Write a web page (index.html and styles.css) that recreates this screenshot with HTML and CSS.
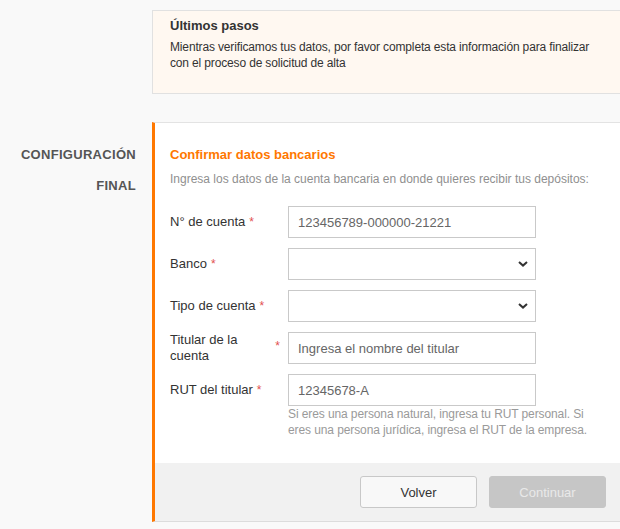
FILE: index.html
```html
<!DOCTYPE html>
<html lang="es">
<head>
<meta charset="utf-8">
<link rel="stylesheet" href="styles.css">
</head>
<body>
<div class="page">
  <section class="notice">
    <h2 class="notice-title">Últimos pasos</h2>
    <p class="notice-text">Mientras verificamos tus datos, por favor completa esta información para finalizar con el proceso de solicitud de alta</p>
  </section>

  <div class="step">
    <div class="step-name">CONFIGURACIÓN<br>FINAL</div>
    <section class="card">
      <div class="card-body">
        <h3 class="card-title">Confirmar datos bancarios</h3>
        <p class="card-sub">Ingresa los datos de la cuenta bancaria en donde quieres recibir tus depósitos:</p>

        <div class="row">
          <label class="label"><span>N° de cuenta</span><span class="req">*</span></label>
          <div class="field"><input class="input" type="text" value="123456789-000000-21221"></div>
        </div>
        <div class="row">
          <label class="label"><span>Banco</span><span class="req">*</span></label>
          <div class="field"><div class="select"><svg class="chev" viewBox="0 0 10 6" width="10" height="6"><path d="M1 1l4 3.6L9 1" fill="none" stroke="#333" stroke-width="2"/></svg></div></div>
        </div>
        <div class="row">
          <label class="label"><span>Tipo de cuenta</span><span class="req">*</span></label>
          <div class="field"><div class="select"><svg class="chev" viewBox="0 0 10 6" width="10" height="6"><path d="M1 1l4 3.6L9 1" fill="none" stroke="#333" stroke-width="2"/></svg></div></div>
        </div>
        <div class="row">
          <label class="label label-wrap"><span class="label-text">Titular de la cuenta</span><span class="req">*</span></label>
          <div class="field"><input class="input" type="text" placeholder="Ingresa el nombre del titular"></div>
        </div>
        <div class="row">
          <label class="label"><span>RUT del titular</span><span class="req">*</span></label>
          <div class="field">
            <input class="input" type="text" value="12345678-A">
            <p class="help">Si eres una persona natural, ingresa tu RUT personal. Si eres una persona jurídica, ingresa el RUT de la empresa.</p>
          </div>
        </div>
      </div>
      <div class="card-foot">
        <button class="btn btn-back" type="button">Volver</button>
        <button class="btn btn-next" type="button" disabled>Continuar</button>
      </div>
    </section>
  </div>
</div>
</body>
</html>
```

FILE: styles.css
```css
html, body {
  margin: 0;
  padding: 0;
}
body {
  background: #f9f9f9;
  font-family: "Liberation Sans", Arial, sans-serif;
  color: #333;
  overflow: hidden;
}
.page {
  width: 622px;
  padding-top: 10px;
}
.notice {
  margin-left: 152px;
  background: #fff8f1;
  border: 1px solid #e1e1e1;
  padding: 7px 0 22px 17px;
}
.notice-title {
  margin: 0;
  font-size: 13px;
  line-height: 16px;
  font-weight: bold;
  color: #333;
}
.notice-text {
  margin: 5px 0 0;
  max-width: 428px;
  font-size: 12px;
  line-height: 16px;
  color: #333;
  letter-spacing: -0.15px;
}
.step {
  display: flex;
  margin-top: 28px;
}
.step-name {
  width: 152px;
  box-sizing: border-box;
  padding: 17px 16px 0 0;
  text-align: right;
  font-size: 13px;
  line-height: 31px;
  font-weight: bold;
  color: #555;
  letter-spacing: 0.3px;
}
.card {
  flex: 1;
  background: #fff;
  border-top: 1px solid #e3e3e3;
  border-bottom: 1px solid #dcdcdc;
  border-right: 1px solid #e3e3e3;
  border-left: 3px solid #ff7800;
}
.card-body {
  padding: 24px 15px 25px 15px;
}
.card-title {
  margin: 0;
  font-size: 13px;
  line-height: 16px;
  font-weight: bold;
  color: #ff7800;
}
.card-sub {
  margin: 8px 0 19px;
  font-size: 12px;
  line-height: 16px;
  color: #8f8f8f;
}
.row {
  display: flex;
  align-items: flex-start;
  margin-bottom: 10px;
}
.row:last-child {
  margin-bottom: 0;
}
.label {
  width: 118px;
  min-height: 32px;
  box-sizing: border-box;
  padding-right: 8px;
  display: flex;
  align-items: center;
  font-size: 13px;
  line-height: 16px;
  color: #333;
}
.req {
  color: #e25050;
  margin-left: 4px;
  font-size: 12px;
  align-self: flex-start;
  margin-top: 8px;
}
.label-wrap .label-text {
  flex: 1;
}
.label-wrap .req {
  margin-top: 6px;
}
.field {
  width: 318px;
}
.input, .select {
  display: block;
  width: 248px;
  height: 32px;
  box-sizing: border-box;
  border: 1px solid #c9c9c9;
  background: #fff;
  margin: 0;
  padding: 0 9px;
  font-family: "Liberation Sans", Arial, sans-serif;
  font-size: 13px;
  color: #666;
  border-radius: 0;
  outline: none;
}
.input::placeholder {
  color: #666;
  opacity: 1;
}
.select {
  display: flex;
  align-items: center;
  justify-content: flex-end;
  padding-right: 7px;
}
.chev {
  display: block;
}
.help {
  margin: 0;
  width: 312px;
  font-size: 12px;
  line-height: 16px;
  color: #9a9a9a;
  letter-spacing: -0.1px;
}
.card-foot {
  background: #f1f1f1;
  display: flex;
  justify-content: flex-end;
  gap: 12px;
  padding: 13px 15px 13px 0;
}
.btn {
  width: 117px;
  height: 32px;
  border-radius: 3px;
  font-family: "Liberation Sans", Arial, sans-serif;
  font-size: 13px;
  padding: 0;
  margin: 0;
}
.btn-back {
  background: #f8f8f8;
  border: 1px solid #c8c8c8;
  color: #333;
}
.btn-next {
  background: #c6c6c6;
  border: 1px solid #c6c6c6;
  color: #e9e9e9;
}
```
